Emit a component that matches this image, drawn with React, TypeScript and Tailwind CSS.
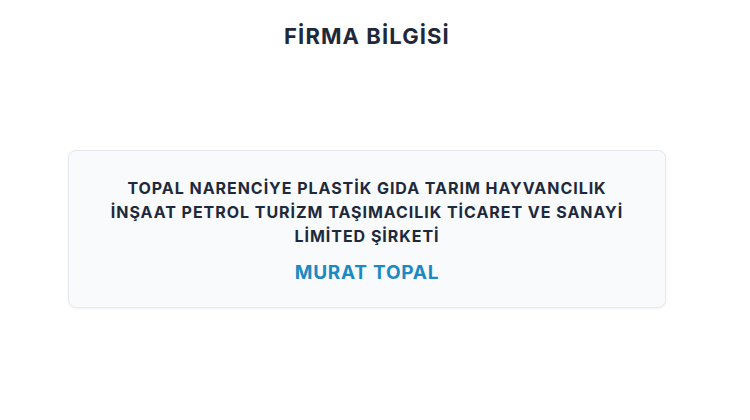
export default function App() {
  return (
    <div
      className="h-[420px] w-[750px] overflow-hidden bg-white"
      style={{ fontFamily: '"Inter", "Noto Sans", sans-serif' }}
    >
      <div className="flex w-[734px] flex-col items-center pt-[22px]">
        <h1 className="text-[22px] font-bold leading-[28px] tracking-[0.05em] text-[#1e293b]">
          FİRMA BİLGİSİ
        </h1>
        <div className="mt-[100px] w-[598px] rounded-lg border border-[#e5e9ef] bg-[#f8fafc] px-6 pb-[20px] pt-[25px] text-center shadow-[0_1px_3px_rgba(15,23,42,0.05)]">
          <p className="text-[16px] font-bold leading-[24px] tracking-[0.06em] text-[#1e293b]">
            TOPAL NARENCİYE PLASTİK GIDA TARIM HAYVANCILIK
            <br />
            İNŞAAT PETROL TURİZM TAŞIMACILIK TİCARET VE SANAYİ
            <br />
            LİMİTED ŞİRKETİ
          </p>
          <p className="mt-[11px] text-[19px] font-bold leading-[28px] tracking-[0.04em] text-[#1b8ac3]">
            MURAT TOPAL
          </p>
        </div>
      </div>
    </div>
  );
}
